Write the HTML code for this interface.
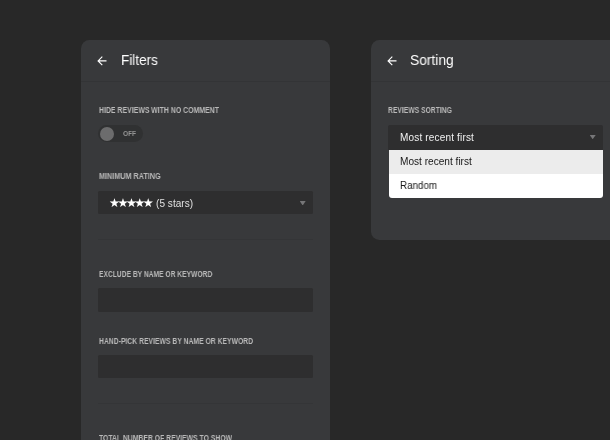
<!DOCTYPE html>
<html><head><meta charset="utf-8">
<style>
html,body{margin:0;padding:0;}
body{width:610px;height:440px;overflow:hidden;background:#282828;font-family:"Liberation Sans",sans-serif;position:relative;}
body *{position:absolute;box-sizing:border-box;}
.t,.lbl,.off,.st,.sv,.op{will-change:transform;}
.panel{background:#38393b;border-radius:8.5px;}
#p1{left:81.2px;top:39.9px;width:249.1px;height:420px;}
#p2{left:370.7px;top:39.9px;width:260px;height:200px;}
.hl{height:1px;top:81.4px;background:#333436;}
.ico{width:13.8px;height:13.8px;top:53.8px;}
.t{top:50.4px;font-size:14.2px;color:#fff;line-height:20px;white-space:nowrap;transform-origin:0 50%;}
.lbl{left:98.6px;font-size:8.2px;font-weight:bold;color:#b9b9b9;line-height:10px;white-space:nowrap;transform-origin:0 50%;}
.box{left:98px;width:214.8px;background:#2e2e2f;border-radius:1.5px;}
.sep{left:98px;width:214.8px;height:1px;background:#343537;}
.tog{left:98px;top:125px;width:45px;height:17.2px;border-radius:9px;background:#303132;}
.knob{left:100.1px;top:126.6px;width:14px;height:14px;border-radius:50%;background:#6c6c6d;}
.off{left:123px;top:129.4px;font-size:7px;font-weight:bold;color:#979797;line-height:9px;transform-origin:0 50%;transform:scaleX(0.93);}
.car{width:6px;height:4.3px;background:#767678;clip-path:polygon(0 0,100% 0,50% 100%);}
.st{font-family:"DejaVu Sans",sans-serif;color:#fff;white-space:nowrap;}
.sv{font-size:10px;color:#f2f2f2;line-height:14px;white-space:nowrap;}
.dd{left:388.6px;top:149.7px;width:214.4px;height:48.4px;background:#fff;border-radius:0 0 3px 3px;overflow:hidden;}
.dd .a{left:0;top:0;width:100%;height:24px;background:#ececec;}
.op{font-size:10px;color:#181818;line-height:14px;white-space:nowrap;transform-origin:0 50%;}
</style></head><body>
<div class="panel" id="p1"></div>
<div class="panel" id="p2"></div>
<div class="hl" style="left:81.2px;width:249.1px"></div>
<div class="hl" style="left:370.7px;width:240px"></div>

<svg class="ico" style="left:95.1px" viewBox="0 0 24 24"><path fill="#fff" d="M20 11H7.83l5.59-5.59L12 4l-8 8 8 8 1.41-1.41L7.83 13H20v-2z"/></svg>
<div class="t" style="left:120.8px;transform:scaleX(0.955)">Filters</div>
<svg class="ico" style="left:384.9px" viewBox="0 0 24 24"><path fill="#fff" d="M20 11H7.83l5.59-5.59L12 4l-8 8 8 8 1.41-1.41L7.83 13H20v-2z"/></svg>
<div class="t" style="left:410.2px;transform:scaleX(0.972)">Sorting</div>

<div class="lbl" style="top:106.2px;transform:scaleX(0.845)">HIDE REVIEWS WITH NO COMMENT</div>
<div class="tog"></div><div class="knob"></div><div class="off">OFF</div>
<div class="lbl" style="top:172.2px;transform:scaleX(0.883)">MINIMUM RATING</div>
<div class="box" style="top:191.1px;height:23.1px;width:214.5px"></div>
<div class="st" style="left:109.3px;top:196.4px;font-size:12.2px;line-height:14px;letter-spacing:-2.48px">★★★★★</div>
<div class="sv" style="left:156.1px;top:197.2px;letter-spacing:0.06px;color:#e0e0e0">(5 stars)</div>
<div class="car" style="left:299.7px;top:201.1px"></div>
<div class="sep" style="top:238.6px"></div>
<div class="lbl" style="top:270.2px;transform:scaleX(0.817)">EXCLUDE BY NAME OR KEYWORD</div>
<div class="box" style="top:288.2px;height:24.1px"></div>
<div class="lbl" style="top:337.2px;transform:scaleX(0.831)">HAND-PICK REVIEWS BY NAME OR KEYWORD</div>
<div class="box" style="top:354.5px;height:23.9px"></div>
<div class="sep" style="top:403.2px"></div>
<div class="lbl" style="top:434.2px;transform:scaleX(0.834)">TOTAL NUMBER OF REVIEWS TO SHOW</div>

<div class="lbl" style="left:388.1px;top:106.2px;transform:scaleX(0.826)">REVIEWS SORTING</div>
<div class="box" style="left:388.3px;top:124.8px;width:214.7px;height:25px;border-radius:2px 2px 0 0"></div>
<div class="sv" style="left:399.9px;top:131.1px;letter-spacing:0.17px">Most recent first</div>
<div class="car" style="left:589.7px;top:135px"></div>
<div class="dd"><div class="a"></div></div>
<div class="op" style="left:400.4px;top:155.1px;transform:scaleX(1.01)">Most recent first</div>
<div class="op" style="left:400.4px;top:179.1px;transform:scaleX(0.98)">Random</div>
</body></html>
